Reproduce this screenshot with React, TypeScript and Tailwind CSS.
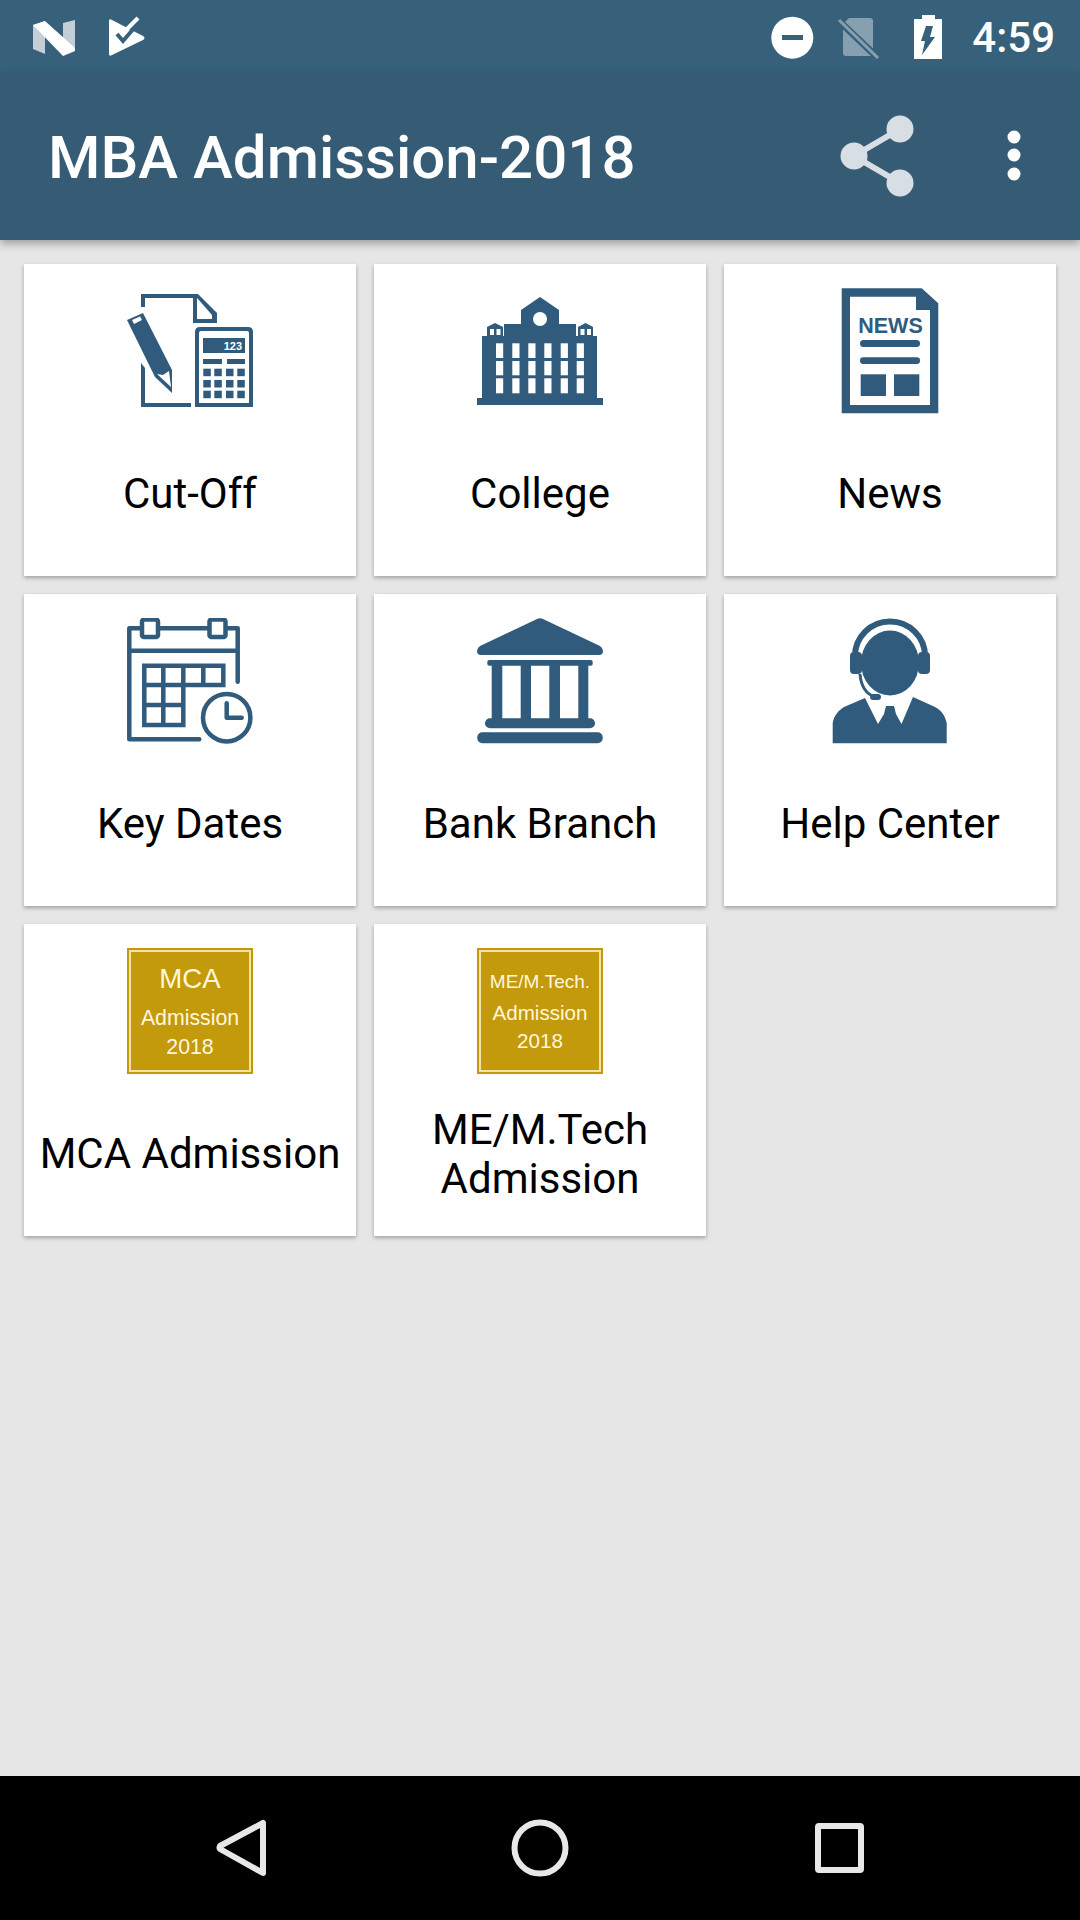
import React from 'react';

const BLUE = '#315b7c';

function CutOffIcon() {
  const keyX = [76.3, 87.3, 99, 110.3];
  const keyY = [80.7, 92, 102.7];
  return (
    <svg width="126" height="126" viewBox="0 0 126 126" fill={BLUE}>
      <path d="M14 19V6H71L90 25V35H66V10H18V19Z" fillRule="evenodd" />
      <path d="M70 10V31H85V27L71 11Z" fill="#fff" />
      <path d="M14 75L18 80V115H64V119H14Z" />
      <path d="M0 32L16 25L45 82V105L28 89Z" />
      <path d="M5 32L13 28.5L15 32L7 36Z" fill="#fff" />
      <path d="M30 86L36 87L42 83L44 99Z" fill="#fff" />
      <path d="M68 119V44Q68 39 73 39H121Q126 39 126 44V119ZM72 115H122V45Q122 43 120 43H74Q72 43 72 45Z" fillRule="evenodd" />
      <rect x="76" y="50" width="42" height="15" />
      <text x="115" y="61.5" textAnchor="end" fontSize="11" fontWeight="700" fill="#fff" fontFamily="'Liberation Sans', sans-serif">123</text>
      <rect x="76" y="71" width="19" height="5" />
      <rect x="100" y="71" width="18" height="5" />
      {keyY.map((y) => keyX.map((x) => <rect key={`${x}-${y}`} x={x} y={y} width="7.5" height="7.5" />))}
    </svg>
  );
}

function CollegeIcon() {
  const cols = [19, 35.3, 51.3, 67.3, 83.7, 99.7];
  const rows: [number, number][] = [[55.3, 14.7], [73, 14.3], [90.3, 15]];
  return (
    <svg width="126" height="126" viewBox="0 0 126 126" fill={BLUE}>
      <rect x="0" y="110" width="126" height="7" />
      <rect x="5" y="48" width="115" height="62" />
      <rect x="27" y="36" width="72" height="12" />
      <path d="M44 36V22L63 9L82 22V36Z" />
      <circle cx="63" cy="31" r="7" fill="#fff" />
      <path d="M10 48V39L18 35L26 39V48Z" />
      <path d="M101 48V39L108.5 35L116 39V48Z" />
      <rect x="13" y="41" width="4" height="6" fill="#fff" />
      <rect x="19.5" y="41" width="4" height="6" fill="#fff" />
      <rect x="103.5" y="41" width="4" height="6" fill="#fff" />
      <rect x="110" y="41" width="4" height="6" fill="#fff" />
      {cols.map((x) => rows.map(([y, h]) => <rect key={`${x}-${y}`} x={x} y={y} width="7.2" height={h} fill="#fff" />))}
    </svg>
  );
}

function NewsIcon() {
  return (
    <svg width="126" height="126" viewBox="0 0 126 126" fill={BLUE}>
      <path d="M14.7 0.3H94.7L111.3 15.3V125.3H14.7ZM23 8.7V117H103V22H89V8.7Z" fillRule="evenodd" />
      <text x="63.5" y="44.5" textAnchor="middle" fontSize="21.5" fontWeight="700" fontFamily="'Liberation Sans', sans-serif">NEWS</text>
      <rect x="33" y="52" width="60" height="7" rx="3.5" />
      <rect x="33" y="69.3" width="60" height="6.7" rx="3.3" />
      <rect x="33.7" y="86.3" width="25.3" height="21.7" />
      <rect x="67" y="86.3" width="25.3" height="21.7" />
    </svg>
  );
}

function KeyDatesIcon() {
  return (
    <svg width="126" height="126" viewBox="0 0 126 126" fill="none" stroke={BLUE} strokeWidth="4.5">
      <path d="M110.7 63.7V10.3H2.3V121.3H72.3" strokeLinecap="round" strokeLinejoin="round" />
      <path d="M2.3 32.7H110.7" />
      <rect x="15" y="1.5" width="16" height="17.5" rx="2" fill="#fff" />
      <rect x="82.5" y="1.5" width="16" height="17.5" rx="2" fill="#fff" />
      <path d="M17.3 47.7H96.3V67H17.3ZM17.3 67V107H56.3V47.7M36.3 47.7V107M76.3 47.7V67M17.3 87H56.3" />
      <circle cx="99.7" cy="99.7" r="23.7" />
      <path d="M99.7 85.3V99.7H114.7" strokeLinecap="round" strokeLinejoin="round" />
    </svg>
  );
}

function BankIcon() {
  return (
    <svg width="126" height="126" viewBox="0 0 126 126" fill={BLUE}>
      <path d="M60 1Q63 -0.5 66 1L123 28Q126 30 126 33Q126 37 122 37H4Q0 37 0 33Q0 30 3 28Z" />
      <rect x="10.3" y="42" width="105.4" height="5.7" rx="2" />
      <rect x="14.7" y="47" width="10.6" height="54" />
      <rect x="43.7" y="47" width="10.3" height="54" />
      <rect x="72.3" y="47" width="10.7" height="54" />
      <rect x="101.3" y="47" width="10" height="54" />
      <rect x="8" y="100.3" width="110" height="10" rx="5" />
      <rect x="0.3" y="114.3" width="125.4" height="11" rx="5" />
    </svg>
  );
}

function HelpIcon() {
  return (
    <svg width="126" height="126" viewBox="0 0 126 126" fill={BLUE}>
      <ellipse cx="63" cy="45" rx="29" ry="32.5" />
      <path d="M28 38A35 34.5 0 0 1 98 38" fill="none" stroke={BLUE} strokeWidth="6" />
      <rect x="23" y="34" width="12" height="22" rx="4" />
      <rect x="91" y="34" width="12" height="22" rx="4" />
      <path d="M33 56C34 68 39 76 48 79" fill="none" stroke={BLUE} strokeWidth="3" />
      <rect x="43" y="76" width="11" height="6" rx="3" />
      <path d="M5.7 125.3V105C7 97 12 92 17 89L38 80L51 106L57 96L59 88H67L69 96L74.5 106L86 79L108 89C114 92 118 97 119.7 105V125.3Z" />
    </svg>
  );
}

function GoldTile({ lines }: { lines: { text: string; y: number; size: number }[] }) {
  return (
    <svg width="126" height="126" viewBox="0 0 126 126">
      <rect width="126" height="126" fill="#c39a0c" />
      <rect x="3" y="3" width="120" height="120" fill="none" stroke="#f3e2a6" strokeWidth="2" />
      {lines.map((l) => (
        <text key={l.text} x="63" y={l.y} textAnchor="middle" fontSize={l.size} fill="#fff7dc" fontFamily="'Liberation Sans', sans-serif">
          {l.text}
        </text>
      ))}
    </svg>
  );
}

const items = [
  { label: 'Cut-Off', icon: <CutOffIcon /> },
  { label: 'College', icon: <CollegeIcon /> },
  { label: 'News', icon: <NewsIcon /> },
  { label: 'Key Dates', icon: <KeyDatesIcon /> },
  { label: 'Bank Branch', icon: <BankIcon /> },
  { label: 'Help Center', icon: <HelpIcon /> },
  {
    label: 'MCA Admission',
    icon: (
      <GoldTile
        lines={[
          { text: 'MCA', y: 40, size: 27.6 },
          { text: 'Admission', y: 77, size: 21.3 },
          { text: '2018', y: 106, size: 21.3 },
        ]}
      />
    ),
  },
  {
    label: 'ME/M.Tech Admission',
    icon: (
      <GoldTile
        lines={[
          { text: 'ME/M.Tech.', y: 40, size: 19 },
          { text: 'Admission', y: 72, size: 20.6 },
          { text: '2018', y: 100, size: 20.6 },
        ]}
      />
    ),
  },
];

export default function App() {
  return (
    <div className="w-[1080px] h-[1920px] flex flex-col bg-[#e6e6e6] font-['Roboto',sans-serif] overflow-hidden">
      {/* status bar */}
      <div className="h-[72px] shrink-0 bg-[#37617b] flex items-center justify-between relative z-10">
        <svg width="140" height="60" viewBox="0 0 140 60" className="ml-[20px]">
          <path d="M13 19L25 15V48L13 43Z" fill="#c3ced6" />
          <path d="M43 17L55 14V45L43 38Z" fill="#c3ced6" />
          <path d="M13 19L25 15L55 42V45L43 50Z" fill="#fff" />
          <path d="M89 15Q89 12 92 14L123 30Q126 32 123 34L92 49Q89 51 89 48Z" fill="#fff" />
          <path d="M97 28L103 35L115 21" fill="none" stroke="#37617b" strokeWidth="4" />
          <path d="M108 22L118 13" fill="none" stroke="#37617b" strokeWidth="8" />
          <path d="M107 23L118 12" fill="none" stroke="#fff" strokeWidth="4" />
        </svg>
        <div className="flex items-center">
          <svg width="190" height="60" viewBox="770 5 190 60">
            <circle cx="792.3" cy="36.7" r="21" fill="#fff" />
            <rect x="782" y="34" width="21" height="5" fill="#37617b" />
            <path d="M849 17H870Q873 17 873 20V52Q873 55 870 55H846Q843 55 843 52V23Z" fill="#fff" fillOpacity="0.4" />
            <path d="M838 19L878 57" stroke="#37617b" strokeWidth="7" />
            <path d="M839 19L878 57" stroke="#fff" strokeOpacity="0.4" strokeWidth="3" />
            <path d="M922 18V14H935V18H942V58H914V18Z" fill="#fff" />
            <path d="M926 25H933L930 36H935L922 54L925 40H921Z" fill="#37617b" />
          </svg>
          <span className="ml-[12px] mr-[25px] mt-[2px] text-[42px] leading-[49px] font-medium text-white">4:59</span>
        </div>
      </div>

      {/* toolbar */}
      <div className="h-[168px] shrink-0 bg-[#355b75] flex items-center justify-between shadow-[0_4px_8px_rgba(0,0,0,0.3)] relative z-10">
        <h1 className="ml-[48px] mt-[4px] text-[60px] leading-[70px] font-medium text-white">MBA Admission-2018</h1>
        <div className="flex items-center">
          <svg width="76" height="84" viewBox="838 114 76 84" fill="#d7dee4">
            <circle cx="899" cy="129" r="13.5" />
            <circle cx="853" cy="156" r="13.5" />
            <circle cx="899" cy="183" r="13.5" />
            <path d="M899 129L853 156L899 183" fill="none" stroke="#d7dee4" strokeWidth="6" />
          </svg>
          <svg width="16" height="52" viewBox="0 0 16 52" fill="#fff" className="ml-[91px] mr-[58px]">
            <circle cx="8" cy="7" r="6.5" />
            <circle cx="8" cy="25" r="6.5" />
            <circle cx="8" cy="44" r="6.5" />
          </svg>
        </div>
      </div>

      {/* menu grid */}
      <div className="flex-1 px-[24px] pt-[24px]">
        <div className="grid grid-cols-3 gap-[18px]">
          {items.map((item) => (
            <div key={item.label} className="h-[312px] bg-white shadow-[0_2px_4px_rgba(0,0,0,0.3)] flex flex-col items-center pt-[24px]">
              {item.icon}
              <div className="h-[159px] px-[12px] flex items-center justify-center text-center text-[42px] leading-[49px] text-black">
                {item.label}
              </div>
            </div>
          ))}
        </div>
      </div>

      {/* nav bar */}
      <div className="h-[144px] shrink-0 bg-black flex items-center justify-center">
        <svg width="1080" height="144" viewBox="0 1776 1080 144" fill="none" stroke="#e8e8e8" strokeWidth="6">
          <path d="M263 1823V1873L220 1849Q219 1848 220 1846Z" strokeLinejoin="round" />
          <circle cx="540" cy="1848" r="25.5" />
          <rect x="818" y="1826" width="43" height="44" rx="1" />
        </svg>
      </div>
    </div>
  );
}
